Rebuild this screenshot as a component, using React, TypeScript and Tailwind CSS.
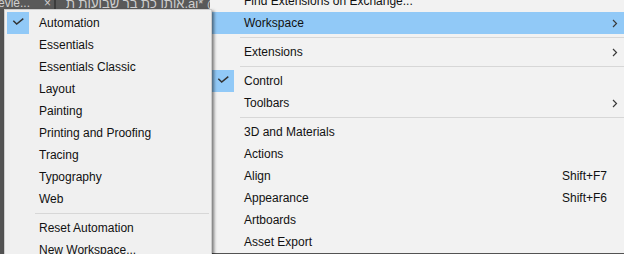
import type { ReactNode } from 'react';

type Item = {
  label?: string;
  checked?: boolean;
  active?: boolean;
  shortcut?: string;
  submenu?: boolean;
  separator?: boolean;
};

const WORKSPACES: Item[] = [
  { label: 'Automation', checked: true },
  { label: 'Essentials' },
  { label: 'Essentials Classic' },
  { label: 'Layout' },
  { label: 'Painting' },
  { label: 'Printing and Proofing' },
  { label: 'Tracing' },
  { label: 'Typography' },
  { label: 'Web' },
  { separator: true },
  { label: 'Reset Automation' },
  { label: 'New Workspace...' },
];

const WINDOW_MENU: Item[] = [
  { label: 'Find Extensions on Exchange...' },
  { label: 'Workspace', active: true, submenu: true },
  { separator: true },
  { label: 'Extensions', submenu: true },
  { separator: true },
  { label: 'Control', checked: true },
  { label: 'Toolbars', submenu: true },
  { separator: true },
  { label: '3D and Materials' },
  { label: 'Actions' },
  { label: 'Align', shortcut: 'Shift+F7' },
  { label: 'Appearance', shortcut: 'Shift+F6' },
  { label: 'Artboards' },
  { label: 'Asset Export' },
];

function Check() {
  return (
    <svg width="22" height="22" viewBox="0 0 22 22" fill="none">
      <path d="M6.3 8.8 9.7 12.1 16.3 6.6" stroke="#333" strokeWidth="1.5" />
    </svg>
  );
}

function Chevron() {
  return (
    <svg width="6" height="9" viewBox="0 0 6 9" fill="none">
      <path d="M1 1 4.5 4.5 1 8" stroke="#3a3a3a" strokeWidth="1.2" />
    </svg>
  );
}

function MenuRow({ item, wide }: { item: Item; wide?: boolean }): ReactNode {
  if (item.separator) {
    return (
      <div className={`flex h-[7px] items-center pl-[28px] ${wide ? '' : 'pr-[2px]'}`}>
        <div className="h-px w-full bg-[#d7d7d7]" />
      </div>
    );
  }

  return (
    <div
      className={`flex h-[22px] items-center ${item.active ? 'bg-[#91c9f7]' : ''}`}
    >
      <div
        className={`flex h-[22px] w-[22px] shrink-0 items-center justify-center ${
          item.checked ? 'bg-[#91c9f7]' : ''
        }`}
      >
        {item.checked && <Check />}
      </div>
      <span className="ml-[10px] flex-1 whitespace-nowrap">{item.label}</span>
      {wide && (
        <>
          <span className="whitespace-nowrap">{item.shortcut}</span>
          <div className="flex w-[17px] shrink-0 items-center pl-[5px]">
            {item.submenu && <Chevron />}
          </div>
        </>
      )}
    </div>
  );
}

export default function App() {
  return (
    <div className="relative h-[254px] w-[624px] overflow-hidden bg-[#535353] font-['Liberation_Sans',Arial,sans-serif] text-[12px] text-[#111]">
      {/* document tabs strip, mostly hidden under the menus */}
      <div className="flex h-[9px] items-start overflow-hidden text-[#cfcfcf]">
        <div className="relative flex h-[9px] w-[54px] bg-[#595959]">
          <span className="mt-[-6px] ml-[-2px] whitespace-nowrap">evie...</span>
          <span className="mt-[-6px] ml-[14px]">×</span>
        </div>
        <div className="h-[9px] w-[2px] bg-[#3c3c3c]" />
        <div className="flex h-[9px] flex-1 bg-[#595959] pl-[10px]">
          <span className="mt-[-6px] whitespace-nowrap text-[13px] [direction:ltr] [unicode-bidi:bidi-override]">
            ת תועובש רב תכ ותוא.ai* @
          </span>
        </div>
      </div>

      {/* Window menu */}
      <div className="absolute top-[-10px] left-[210px] w-[414px] border-l border-[#f2f2f2] bg-[#f2f2f2] pl-px">
        {WINDOW_MENU.map((item, i) => (
          <MenuRow key={i} item={item} wide />
        ))}
      </div>

      {/* Workspace submenu */}
      <div className="absolute top-[9px] left-[4px] w-[208px] border border-[#cdcdcd] bg-[#f0f0f0] pt-[2px] pl-[2px] shadow-[2px_2px_3px_rgba(0,0,0,0.5)]">
        {WORKSPACES.map((item, i) => (
          <MenuRow key={i} item={item} />
        ))}
      </div>
    </div>
  );
}
